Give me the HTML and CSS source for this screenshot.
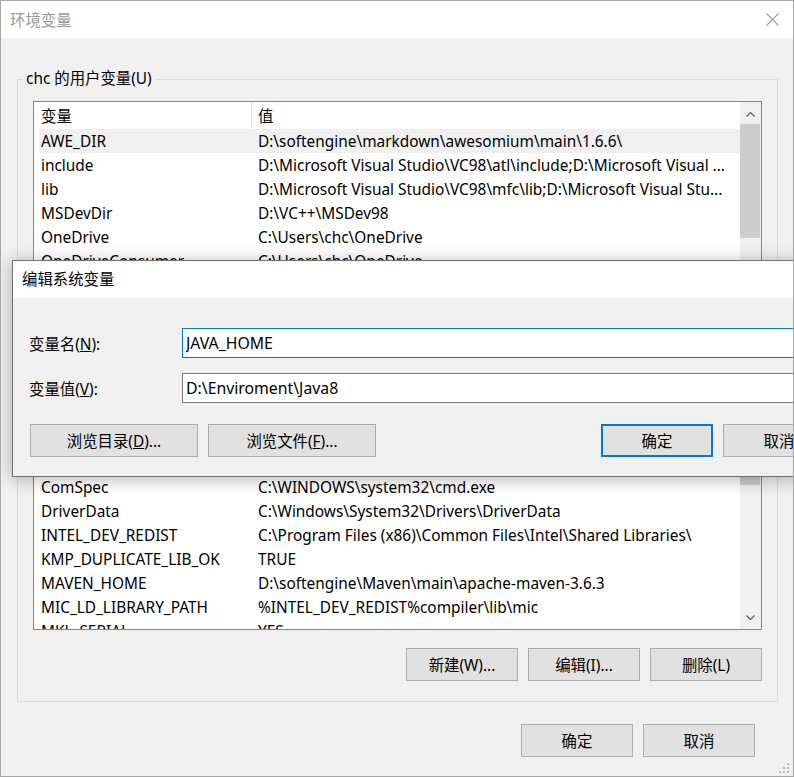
FILE: index.html
```html
<!DOCTYPE html>
<html lang="zh-CN">
<head>
  <meta charset="UTF-8">
  <title>环境变量</title>
  <link rel="stylesheet" href="styles.css">
</head>
<body>

<div class="window">
  <div class="titlebar">
    <span class="title">环境变量</span>
    <svg class="close" width="13" height="13" viewBox="0 0 13 13">
      <path d="M0.5 0.5L12.5 12.5M12.5 0.5L0.5 12.5" stroke="#9b9b9b" stroke-width="1.1" fill="none"/>
    </svg>
  </div>

  <div class="content">
    <!-- user variables -->
    <fieldset class="group">
      <legend>chc 的用户变量(U)</legend>
      <div class="list list-user">
        <div class="list-main">
          <div class="list-head"><div>变量</div><div>值</div></div>
          <div class="rows">
            <div class="row selected"><div>AWE_DIR</div><div>D:\softengine\markdown\awesomium\main\1.6.6\</div></div>
            <div class="row"><div>include</div><div>D:\Microsoft Visual Studio\VC98\atl\include;D:\Microsoft Visual ...</div></div>
            <div class="row"><div>lib</div><div>D:\Microsoft Visual Studio\VC98\mfc\lib;D:\Microsoft Visual Stu...</div></div>
            <div class="row"><div>MSDevDir</div><div>D:\VC++\MSDev98</div></div>
            <div class="row"><div>OneDrive</div><div>C:\Users\chc\OneDrive</div></div>
            <div class="row"><div>OneDriveConsumer</div><div>C:\Users\chc\OneDrive</div></div>
            <div class="row"><div>Path</div><div>C:\Users\chc\AppData\Local\Microsoft\WindowsApps;</div></div>
          </div>
        </div>
        <div class="scrollbar">
          <div class="sb-btn sb-up">
            <svg width="9" height="5" viewBox="0 0 9 5"><path d="M0.5 4.5L4.5 0.5L8.5 4.5" stroke="#606060" stroke-width="1.2" fill="none"/></svg>
          </div>
          <div class="sb-thumb thumb-user"></div>
          <div class="sb-track"></div>
        </div>
      </div>
      <div class="group-buttons">
        <button class="btn">新建(N)...</button>
        <button class="btn">编辑(E)...</button>
        <button class="btn">删除(D)</button>
      </div>
    </fieldset>

    <!-- system variables -->
    <fieldset class="group group-system">
      <legend>系统变量(S)</legend>
      <div class="list list-system">
        <div class="list-main">
          <div class="list-head"><div>变量</div><div>值</div></div>
          <div class="rows">
            <div class="row"><div>ChocolateyInstall</div><div>C:\ProgramData\chocolatey</div></div>
            <div class="row"><div>CLASSPATH</div><div>.;%JAVA_HOME%\lib;%JAVA_HOME%\lib\tools.jar</div></div>
            <div class="row"><div>ComSpec</div><div>C:\WINDOWS\system32\cmd.exe</div></div>
            <div class="row"><div>DriverData</div><div>C:\Windows\System32\Drivers\DriverData</div></div>
            <div class="row"><div>INTEL_DEV_REDIST</div><div>C:\Program Files (x86)\Common Files\Intel\Shared Libraries\</div></div>
            <div class="row"><div>KMP_DUPLICATE_LIB_OK</div><div>TRUE</div></div>
            <div class="row"><div>MAVEN_HOME</div><div>D:\softengine\Maven\main\apache-maven-3.6.3</div></div>
            <div class="row"><div>MIC_LD_LIBRARY_PATH</div><div>%INTEL_DEV_REDIST%compiler\lib\mic</div></div>
            <div class="row"><div>MKL_SERIAL</div><div>YES</div></div>
          </div>
        </div>
        <div class="scrollbar">
          <div class="sb-btn sb-up">
            <svg width="9" height="5" viewBox="0 0 9 5"><path d="M0.5 4.5L4.5 0.5L8.5 4.5" stroke="#606060" stroke-width="1.2" fill="none"/></svg>
          </div>
          <div class="sb-thumb thumb-system"></div>
          <div class="sb-track"></div>
          <div class="sb-btn sb-down">
            <svg width="9" height="5" viewBox="0 0 9 5"><path d="M0.5 0.5L4.5 4.5L8.5 0.5" stroke="#606060" stroke-width="1.2" fill="none"/></svg>
          </div>
        </div>
      </div>
      <div class="group-buttons">
        <button class="btn">新建(W)...</button>
        <button class="btn">编辑(I)...</button>
        <button class="btn">删除(L)</button>
      </div>
    </fieldset>

    <div class="dialog-buttons">
      <button class="btn">确定</button>
      <button class="btn">取消</button>
    </div>
  </div>

  <svg class="grip" width="12" height="12" viewBox="0 0 12 12">
    <rect x="8" y="0" width="2" height="2" fill="#bdbdbd"/>
    <rect x="4" y="4" width="2" height="2" fill="#bdbdbd"/>
    <rect x="8" y="4" width="2" height="2" fill="#bdbdbd"/>
    <rect x="0" y="8" width="2" height="2" fill="#bdbdbd"/>
    <rect x="4" y="8" width="2" height="2" fill="#bdbdbd"/>
    <rect x="8" y="8" width="2" height="2" fill="#bdbdbd"/>
  </svg>

  <!-- edit system variable dialog, on top -->
  <div class="edit-dialog">
    <div class="dlg-title">编辑系统变量</div>
    <div class="dlg-body">
      <div class="field">
        <label for="var-name">变量名(<u>N</u>):</label>
        <input id="var-name" class="focused" type="text" value="JAVA_HOME">
      </div>
      <div class="field">
        <label for="var-value">变量值(<u>V</u>):</label>
        <input id="var-value" type="text" value="D:\Enviroment\Java8">
      </div>
      <div class="dlg-buttons">
        <button class="btn btn-wide">浏览目录(<u>D</u>)...</button>
        <button class="btn btn-wide">浏览文件(<u>F</u>)...</button>
        <button class="btn btn-default">确定</button>
        <button class="btn">取消</button>
      </div>
    </div>
  </div>
</div>

</body>
</html>
```

FILE: styles.css
```css
* {
  box-sizing: border-box;
}

body {
  margin: 0;
  font-family: "Noto Sans", "Noto Sans CJK SC", sans-serif;
  font-size: 15.4px;
  color: #000;
  background: #f0f0f0;
}

.window {
  position: relative;
  width: 794px;
  height: 777px;
  border: 1px solid #a8a8a8;
  background: #f0f0f0;
  overflow: hidden;
  display: flex;
  flex-direction: column;
}

.titlebar {
  height: 37px;
  flex: none;
  background: #fff;
  display: flex;
  align-items: center;
  justify-content: space-between;
  padding: 0 14px 0 9px;
}

.title {
  color: #999;
}

.close {
  display: block;
}

.content {
  flex: 1;
  padding: 0 15px 0 16px;
  display: flex;
  flex-direction: column;
}

/* group boxes */
.group {
  margin: 31px 0 0;
  padding: 12px 0 20px;
  border: 1px solid #dcdcdc;
  min-width: 0;
}

.group legend {
  margin-left: 5px;
  padding: 0 3px;
  line-height: 20px;
}

.group-system {
  margin-top: 14px;
}

/* list view */
.list {
  margin: 0 15px;
  border: 1px solid #828790;
  background: #fff;
  display: flex;
  overflow: hidden;
}

.list-user {
  height: 180px;
}

.list-system {
  height: 231px;
}

.list-main {
  flex: 1;
  min-width: 0;
  display: flex;
  flex-direction: column;
}

.list-head {
  display: grid;
  grid-template-columns: 218px 1fr;
  height: 27px;
  flex: none;
}

.list-head div {
  padding: 2px 0 0 6px;
  line-height: 25px;
}

.list-head div:first-child {
  padding-left: 7px;
  border-right: 1px solid #e5e5e5;
}

.rows {
  padding-left: 5px;
}

.row {
  display: grid;
  grid-template-columns: 217px 1fr;
  height: 24px;
  line-height: 24px;
}

.row div {
  padding: 1px 4px 0 2px;
  white-space: nowrap;
  overflow: hidden;
  text-overflow: ellipsis;
}

.row.selected {
  background: #f0f0f0;
}

/* scrollbar */
.scrollbar {
  width: 21px;
  flex: none;
  background: #f0f0f0;
  display: flex;
  flex-direction: column;
}

.sb-btn {
  height: 22px;
  flex: none;
  display: flex;
  align-items: center;
  justify-content: center;
  padding-right: 1px;
}

.sb-up {
  padding-top: 2px;
}

.sb-down {
  height: 24px;
  padding-top: 0;
}

.sb-thumb {
  flex: none;
  margin-right: 1px;
  background: #cdcdcd;
}

.thumb-user {
  height: 114px;
}

.thumb-system {
  height: 63px;
}

.sb-track {
  flex: 1;
}

/* buttons */
.btn {
  width: 112px;
  height: 33px;
  padding: 0;
  border: 1px solid #adadad;
  background: #e1e1e1;
  font: inherit;
  color: #000;
}

.group-buttons {
  display: flex;
  justify-content: flex-end;
  gap: 10px;
  margin: 18px 15px 0;
}

.dialog-buttons {
  display: flex;
  justify-content: flex-end;
  gap: 10px;
  margin: 22px 23px 0 0;
}

.grip {
  position: absolute;
  left: 778px;
  top: 762px;
}

/* edit dialog */
.edit-dialog {
  position: absolute;
  left: 11px;
  top: 259px;
  width: 840px;
  height: 217px;
  border: 1px solid #707070;
  background: #f0f0f0;
  box-shadow: 0 2px 16px rgba(0, 0, 0, 0.3);
}

.dlg-title {
  height: 37px;
  line-height: 37px;
  background: #fff;
  padding-left: 9px;
}

.dlg-body {
  padding: 30px 0 0 16px;
}

.field {
  display: flex;
  align-items: center;
  margin-bottom: 15px;
}

.field label {
  width: 153px;
  flex: none;
}

.field input {
  width: 700px;
  height: 30px;
  border: 1px solid #7a7a7a;
  padding: 0 0 0 3px;
  font: inherit;
  font-size: 15.8px;
  color: #000;
  background: #fff;
  outline: none;
}

.field input.focused {
  border-color: #0078d7;
}

.dlg-buttons {
  display: flex;
  gap: 10px;
  margin: 21px 0 0 1px;
}

.btn-wide {
  width: 168px;
}

.btn-default {
  margin-left: 215px;
  border: 2px solid #0078d7;
}
```
